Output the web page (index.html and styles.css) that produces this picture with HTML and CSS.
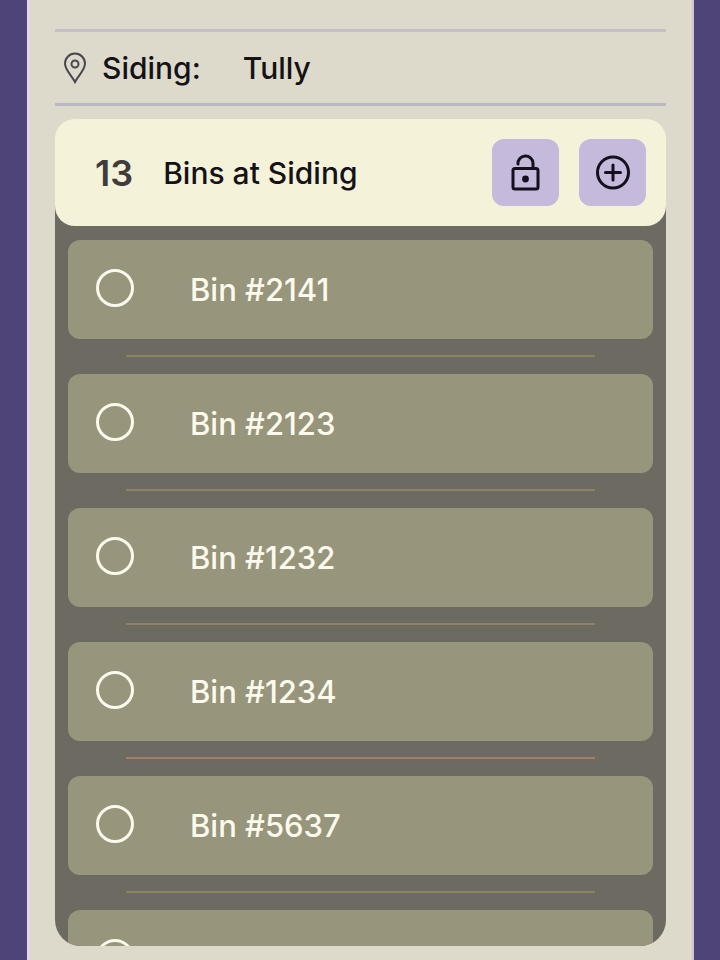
FILE: index.html
```
<!DOCTYPE html>
<html lang="en">
<head>
<meta charset="utf-8">
<meta name="viewport" content="width=device-width, initial-scale=1">
<title>Bins at Siding</title>
<link rel="stylesheet" href="styles.css">
</head>
<body>
<main class="screen">
  <section class="siding">
    <svg class="pin" viewBox="0 0 24 32" aria-hidden="true"><path d="M12 30C9 24 2 18 2 11.500a10 10 0 0 1 20 0C22 18 15 24 12 30Z"/><circle cx="12" cy="12" r="3.500"/></svg>
    <span class="siding-label">Siding:</span>
    <span>Tully</span>
  </section>
  <section class="panel">
    <header class="panel-head">
      <span class="count">13</span>
      <h1 class="title">Bins at Siding</h1>
      <button class="action" type="button" aria-label="Unlock bins"><svg viewBox="0 0 40 40" aria-hidden="true"><rect x="7" y="15.500" width="25" height="20.500" rx="2"/><path d="M12 11a7.500 7.500 0 0 1 15-1v5"/><circle class="dot" cx="19.500" cy="26" r="3.400"/></svg></button>
      <button class="action" type="button" aria-label="Add bin"><svg viewBox="0 0 40 40" aria-hidden="true"><circle cx="20" cy="19.500" r="15.500"/><path d="M20 12v15M12.500 19.500h15"/></svg></button>
    </header>
    <ul class="bins">
      <li class="bin"><label class="card"><input class="pick" type="checkbox">Bin #2141</label></li>
      <li class="bin"><label class="card"><input class="pick" type="checkbox">Bin #2123</label></li>
      <li class="bin"><label class="card"><input class="pick" type="checkbox">Bin #1232</label></li>
      <li class="bin"><label class="card"><input class="pick" type="checkbox">Bin #1234</label></li>
      <li class="bin"><label class="card"><input class="pick" type="checkbox">Bin #5637</label></li>
      <li class="bin"><label class="card"><input class="pick" type="checkbox" aria-label="Next bin"></label></li>
    </ul>
  </section>
</main>
</body>
</html>
```
FILE: styles.css
```
* { box-sizing: border-box; }
body {
  margin: 0;
  height: 100vh;
  padding: 0 26px 0 27px;
  background: #4e4478;
  color: #141216;
  font: 500 30px/40px Inter, "Liberation Sans", sans-serif;
}
.screen {
  display: flex;
  flex-direction: column;
  height: 100%;
  padding: 29px 26px 14px;
  border-left: 2px solid #e4d4f6;
  border-right: 2px solid #d4c0cc;
  background: #dddacb;
}
.siding {
  display: flex;
  align-items: center;
  height: 77px;
  flex: none;
  padding-left: 8px;
  border-top: 3px solid #c6bec6;
  border-bottom: 3px solid #bcb7c6;
}
.pin { width: 24px; height: 32px; margin-right: 15px; fill: none; stroke: #4a4550; stroke-width: 2; }
.siding-label { margin-right: 42px; }
.panel {
  display: flex;
  flex-direction: column;
  flex: 1;
  min-height: 0;
  margin-top: 13px;
}
.panel-head {
  position: relative;
  z-index: 1;
  display: flex;
  align-items: center;
  flex: none;
  height: 107px;
  padding: 0 20px 0 40px;
  border-radius: 20px;
  background: #f5f2da;
}
.count { margin-right: 30px; color: #403c3c; font-size: 36px; font-weight: 600; }
.title { flex: 1; margin: 0; font: inherit; }
.action {
  width: 67px;
  height: 67px;
  margin-left: 20px;
  padding: 0;
  border: 0;
  border-radius: 12px;
  background: #c5b9dc;
}
.action svg { display: block; width: 40px; height: 40px; margin: auto; fill: none; stroke: #15111c; stroke-width: 3; stroke-linecap: round; }
.action .dot { fill: #15111c; stroke: none; }
.bins {
  flex: 1;
  min-height: 0;
  margin: -20px 0 0;
  padding: 34px 13px 0;
  border-radius: 0 0 26px 26px;
  background: #6d6a61;
  list-style: none;
  overflow: hidden;
}
.card {
  display: flex;
  align-items: center;
  height: 99px;
  padding: 0 28px;
  border-radius: 12px;
  background: #98957d;
  color: #fcfaec;
  font-size: 31px;
}
.pick {
  appearance: none;
  width: 38px;
  height: 38px;
  margin: 0 56px 4px 0;
  border: 3px solid #fcfaec;
  border-radius: 50%;
}
.bin:not(:last-child)::after {
  content: "";
  display: block;
  height: 2px;
  margin: 16px 58px 17px;
  background: #8a8462;
}
.bin:nth-child(4)::after { background: #a47e66; }
```
